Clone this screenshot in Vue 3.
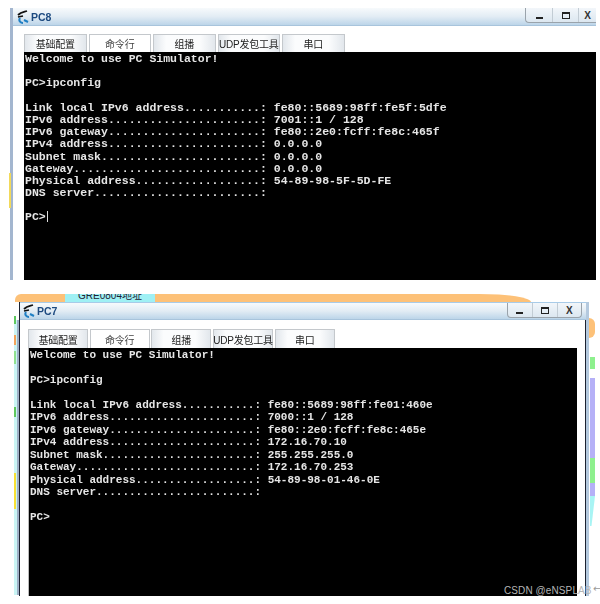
<script setup>
const tabs = ['基础配置', '命令行', '组播', 'UDP发包工具', '串口']
const windows = [
  {
    id: 'top',
    title: 'PC8',
    cursor: true,
    lines: [
      'Welcome to use PC Simulator!',
      '',
      'PC>ipconfig',
      '',
      'Link local IPv6 address...........: fe80::5689:98ff:fe5f:5dfe',
      'IPv6 address......................: 7001::1 / 128',
      'IPv6 gateway......................: fe80::2e0:fcff:fe8c:465f',
      'IPv4 address......................: 0.0.0.0',
      'Subnet mask.......................: 0.0.0.0',
      'Gateway...........................: 0.0.0.0',
      'Physical address..................: 54-89-98-5F-5D-FE',
      'DNS server........................:',
      '',
      'PC>'
    ]
  },
  {
    id: 'bottom',
    title: 'PC7',
    cursor: false,
    lines: [
      'Welcome to use PC Simulator!',
      '',
      'PC>ipconfig',
      '',
      'Link local IPv6 address...........: fe80::5689:98ff:fe01:460e',
      'IPv6 address......................: 7000::1 / 128',
      'IPv6 gateway......................: fe80::2e0:fcff:fe8c:465e',
      'IPv4 address......................: 172.16.70.10',
      'Subnet mask.......................: 255.255.255.0',
      'Gateway...........................: 172.16.70.253',
      'Physical address..................: 54-89-98-01-46-0E',
      'DNS server........................:',
      '',
      'PC>'
    ]
  }
]
</script>

<template>
  <div class="page">
    <section v-for="w in windows" :key="w.id" class="win" :class="'win-' + w.id">
      <div v-if="w.id === 'top'" class="strip top-yellow"></div>
      <template v-if="w.id === 'bottom'">
        <div class="banner"><span class="banner-label">GRE0804地址</span></div>
        <div class="strip l-cyan"></div>
        <div class="strip l-green1"></div>
        <div class="strip l-orange"></div>
        <div class="strip l-green2"></div>
        <div class="strip l-green3"></div>
        <div class="strip l-yellow"></div>
        <div class="strip r-orange"></div>
        <div class="strip r-green"></div>
        <div class="strip r-purple"></div>
        <div class="strip r-green2"></div>
        <div class="strip r-cyan"></div>
      </template>
      <header class="titlebar">
        <svg class="logo" width="12" height="14" viewBox="0 0 12 14">
          <path d="M1 5 C4 2 7 2 10 1" stroke="#111" stroke-width="1.8" fill="none" />
          <path d="M1 7 L6 6" stroke="#111" stroke-width="1.6" fill="none" />
          <path d="M3 8 C1 11 4 13 6 13" stroke="#1f7fc4" stroke-width="2" fill="none" />
          <path d="M7 10 L11 12" stroke="#1f7fc4" stroke-width="2" fill="none" />
        </svg>
        <span class="title">{{ w.title }}</span>
        <div class="controls">
          <span class="ctl"><i class="min"></i></span>
          <span class="ctl"><i class="max"></i></span>
          <span class="ctl close">X</span>
        </div>
      </header>
      <div class="body">
        <nav class="tabs">
          <span v-for="(t, i) in tabs" :key="t" class="tab" :class="{ active: i === 1 }">{{ t }}</span>
        </nav>
        <div class="term">
          <div v-for="(l, i) in w.lines" :key="i" class="line">{{ l }}<i v-if="w.cursor && i === w.lines.length - 1" class="cursor"></i></div>
        </div>
      </div>
    </section>
    <div class="mark">CSDN @eNSPLAB</div>
    <div class="arrow">←</div>
  </div>
</template>

<style scoped>
.page {
  position: relative;
  width: 600px;
  height: 604px;
  overflow: hidden;
  background: #fff;
  display: flex;
  flex-direction: column;
}
.win {
  position: relative;
  display: flex;
  flex-direction: column;
  box-sizing: border-box;
}
.win-top {
  height: 272px;
  margin: 8px 4px 0 10px;
  border-left: 3px solid #a3b6cf;
}
.win-bottom {
  height: 294px;
  margin: 22px 11px 0 19px;
  border-left: 1px solid #1c2230;
  border-right: 3px solid #b4c9de;
}
.banner {
  position: absolute;
  left: -5px;
  top: -8px;
  width: 516px;
  height: 8px;
  background: #fdc178;
  border-radius: 6px 52px 0 0 / 6px 8px 0 0;
}
.banner-label {
  position: absolute;
  left: 50px;
  top: 0;
  width: 90px;
  height: 8px;
  overflow: hidden;
  background: #9ff0f4;
  font: 10px/4px "Liberation Sans", "Noto Sans CJK SC", sans-serif;
  text-align: center;
  color: #223;
}
.strip { position: absolute; }
.top-yellow { left: -4px; top: 165px; width: 2px; height: 35px; background: #f2d95a; }
.l-cyan { left: -6px; top: 18px; width: 5px; height: 275px; background: linear-gradient(90deg, #c9f4f4 50%, #9fb0c6 60%); }
.l-green1 { left: -6px; top: 14px; width: 2px; height: 8px; background: #5ec85e; }
.l-orange { left: -6px; top: 33px; width: 2px; height: 10px; background: #f2a35a; }
.l-green2 { left: -6px; top: 49px; width: 2px; height: 13px; background: #8fe08f; }
.l-green3 { left: -6px; top: 105px; width: 2px; height: 10px; background: #5ec85e; }
.l-yellow { left: -6px; top: 171px; width: 2px; height: 36px; background: #f7e034; }
.r-orange { right: -9px; top: 16px; width: 6px; height: 20px; background: #fdc178; border-radius: 0 8px 8px 0; }
.r-green { right: -9px; top: 55px; width: 5px; height: 12px; background: #8ef08e; }
.r-purple { right: -9px; top: 76px; width: 5px; height: 118px; background: #b5b0f7; }
.r-green2 { right: -9px; top: 156px; width: 5px; height: 25px; background: #8ef08e; }
.r-cyan { right: -9px; top: 194px; width: 5px; height: 30px; background: #a8f4f4; clip-path: polygon(0 0, 100% 0, 30% 100%, 0 100%); }
.titlebar {
  display: flex;
  align-items: center;
  flex: none;
  box-sizing: border-box;
  height: 18px;
  padding-left: 4px;
  background: linear-gradient(#f7fafc, #e2ecf4 50%, #bcd5e9);
  border-bottom: 1px solid #a8c4dc;
}
.win-bottom .titlebar { padding-left: 3px; border-top: 1px solid #a8cbe8; }
.logo { flex: none; filter: blur(0.3px); }
.title {
  margin-left: 2px;
  font: bold 10.5px "Liberation Sans", sans-serif;
  color: #1d4a80;
  filter: blur(0.3px);
}
.controls {
  display: flex;
  align-self: flex-start;
  box-sizing: border-box;
  margin-left: auto;
  height: 15px;
  border: 1px solid #9aa3ab;
  border-top: 0;
  border-right: 0;
  border-radius: 0 0 0 4px;
  background: linear-gradient(#f2f6fa, #dce7f0);
}
.win-bottom .controls { border-right: 1px solid #9aa3ab; border-radius: 0 0 4px 4px; margin-right: 4px; }
.ctl {
  display: flex;
  align-items: center;
  justify-content: center;
  box-sizing: border-box;
  width: 26px;
  border-left: 1px solid #c2ccd4;
}
.win-bottom .ctl { width: 24.5px; }
.ctl:first-child { border-left: 0; }
.win-top .ctl.close { width: 18px; }
.min { width: 7px; height: 2px; margin-top: 6px; background: #222; }
.max { width: 8px; height: 7px; box-sizing: border-box; border: 1px solid #222; border-top-width: 2px; }
.close { font: bold 10px "Liberation Sans", sans-serif; color: #333; }
.body {
  flex: 1;
  display: flex;
  flex-direction: column;
  min-height: 0;
  background: #fff;
}
.win-top .body { padding: 8px 0 0 11px; }
.win-bottom .body { padding: 9px 9px 0 8px; box-shadow: inset -1px 0 #1c2230; }
.tabs { display: flex; flex: none; }
.tab {
  display: flex;
  align-items: center;
  justify-content: center;
  box-sizing: border-box;
  white-space: nowrap;
  border: 1px solid #c4c8cc;
  border-bottom: 0;
  background: linear-gradient(90deg, #e2e7ec, #fbfcfd 20%, #fbfcfd 75%, #e2e7ec);
  font: 10px "Liberation Sans", "Noto Sans CJK SC", sans-serif;
  letter-spacing: -0.2px;
  color: #222;
  filter: blur(0.3px);
}
.tab.active { background: #fff; color: #444; }
.win-top .tab { width: 62.5px; height: 18px; margin-right: 2px; }
.win-bottom .tab { width: 60px; height: 19px; margin-right: 1.7px; }
.term {
  flex: 1;
  min-height: 0;
  overflow: hidden;
  background: #000;
  color: #e6e6e6;
  font-family: "Liberation Mono", monospace;
  font-weight: bold;
  white-space: pre;
}
.win-top .term { padding: 1px 0 0 1px; font-size: 11.53px; line-height: 12.2px; }
.win-bottom .term { padding: 1px 0 0 1px; border-left: 1px solid #bbb; font-size: 11.01px; line-height: 12.47px; }
.line { height: 1lh; filter: blur(0.4px); }
.cursor {
  display: inline-block;
  width: 1px;
  height: 11px;
  margin-left: 1px;
  vertical-align: -2px;
  background: #ddd;
}
.mark {
  position: absolute;
  left: 504px;
  top: 585px;
  white-space: nowrap;
  font: 10px "Liberation Sans", sans-serif;
  letter-spacing: 0.1px;
  color: #b5b5b5;
}
.arrow {
  position: absolute;
  left: 593px;
  top: 583px;
  font: 10px "DejaVu Sans", sans-serif;
  color: #999;
}
</style>

<style>
html, body { margin: 0; background: #fff; }
</style>
